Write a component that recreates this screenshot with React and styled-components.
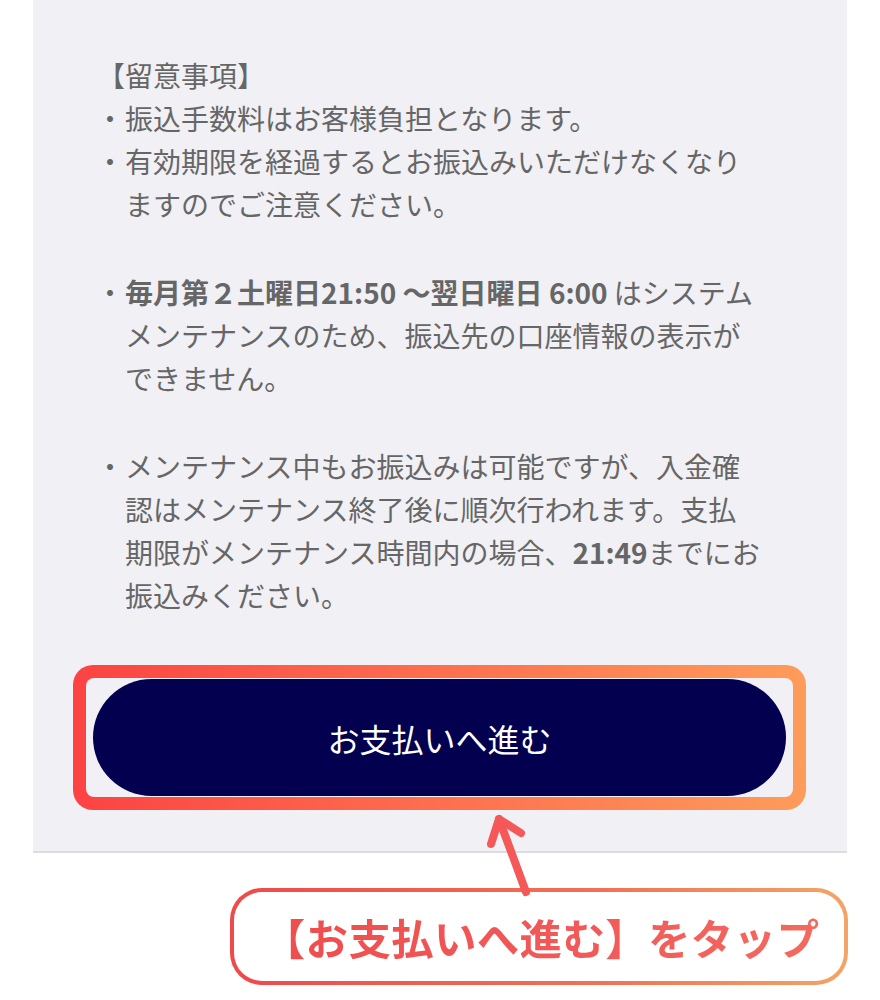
import React from "react";
import styled, { createGlobalStyle } from "styled-components";

const GlobalStyle = createGlobalStyle`
  html, body {
    margin: 0;
    padding: 0;
    background: #fff;
  }
  body {
    font-family: "Noto Sans CJK JP", "Noto Sans", sans-serif;
  }
`;

const Page = styled.div`
  position: relative;
  width: 880px;
  height: 1000px;
  overflow: hidden;
`;

const Panel = styled.section`
  width: 814px;
  margin-left: 33px;
  box-sizing: border-box;
  background: #f1f0f5;
  border-bottom: 2px solid #dcdce2;
  padding: 54px 0 41px 0;
`;

const Notes = styled.div`
  padding-left: 67px;
  color: #666;
  font-size: 28px;
  line-height: 43px;
`;

const Heading = styled.div`
  margin-left: -3px;
`;

const Item = styled.div`
  display: flex;
  margin-top: ${(p) => (p.spaced ? "45px" : "0")};
  white-space: nowrap;

  b {
    font-weight: 700;
  }
`;

const Bullet = styled.span`
  flex-shrink: 0;
  width: 29px;
  margin-left: -4px;
`;

const Frame = styled.div`
  width: 733px;
  margin: 48px 0 0 40px;
  box-sizing: border-box;
  padding: 13px;
  border-radius: 20px;
  background: linear-gradient(90deg, #fb4343 0%, #fd6f4f 50%, #fd9c5b 100%);
`;

const FrameInner = styled.div`
  background: #f1f0f5;
  border-radius: 8px;
  padding: 1px 7px;
`;

const PayButton = styled.button`
  display: flex;
  align-items: center;
  justify-content: center;
  width: 100%;
  height: 117px;
  border: none;
  border-radius: 59px;
  background: #03004f;
  color: #fff;
  font-family: inherit;
  font-size: 32px;
  font-weight: 400;
  cursor: pointer;
`;

const CalloutRow = styled.div`
  display: flex;
  justify-content: flex-end;
  padding: 35px 32px 0 0;
`;

const Callout = styled.div`
  width: 618px;
  height: 97px;
  box-sizing: border-box;
  padding: 4px;
  border-radius: 32px;
  background: linear-gradient(90deg, #ee4a4a 0%, #f07255 60%, #f3a466 100%);
`;

const CalloutInner = styled.div`
  display: flex;
  align-items: center;
  justify-content: center;
  height: 100%;
  border-radius: 28px;
  background: #fff;
  padding-left: 4px;
`;

const CalloutText = styled.span`
  font-size: 42.5px;
  font-weight: 700;
  letter-spacing: 0.3px;
  background: linear-gradient(90deg, #f04c4c 0%, #f25a5a 60%, #f36a5e 100%);
  -webkit-background-clip: text;
  background-clip: text;
  color: transparent;
`;

const Arrow = styled.svg`
  position: absolute;
  left: 470px;
  top: 805px;
  width: 70px;
  height: 95px;
  overflow: visible;
`;

export default function App() {
  return (
    <Page>
      <GlobalStyle />
      <Panel>
        <Notes>
          <Heading>【留意事項】</Heading>
          <Item>
            <Bullet>・</Bullet>
            <span>振込手数料はお客様負担となります。</span>
          </Item>
          <Item>
            <Bullet>・</Bullet>
            <span>
              有効期限を経過するとお振込みいただけなくなり
              <br />
              ますのでご注意ください。
            </span>
          </Item>
          <Item spaced>
            <Bullet>・</Bullet>
            <span>
              <b>毎月第２土曜日21:50 〜翌日曜日 6:00</b> はシステム
              <br />
              メンテナンスのため、振込先の口座情報の表示が
              <br />
              できません。
            </span>
          </Item>
          <Item spaced>
            <Bullet>・</Bullet>
            <span>
              メンテナンス中もお振込みは可能ですが、入金確
              <br />
              認はメンテナンス終了後に順次行われます。支払
              <br />
              期限がメンテナンス時間内の場合、<b>21:49</b>までにお
              <br />
              振込みください。
            </span>
          </Item>
        </Notes>
        <Frame>
          <FrameInner>
            <PayButton type="button">お支払いへ進む</PayButton>
          </FrameInner>
        </Frame>
      </Panel>
      <CalloutRow>
        <Callout>
          <CalloutInner>
            <CalloutText>【お支払いへ進む】をタップ</CalloutText>
          </CalloutInner>
        </Callout>
      </CalloutRow>
      <Arrow viewBox="470 805 70 95">
        <g stroke="#f45858" strokeWidth="8" strokeLinecap="round" strokeLinejoin="round" fill="none">
          <line x1="499" y1="819" x2="526" y2="892" />
          <polyline points="491,844 499,819 521,833" />
        </g>
      </Arrow>
    </Page>
  );
}
